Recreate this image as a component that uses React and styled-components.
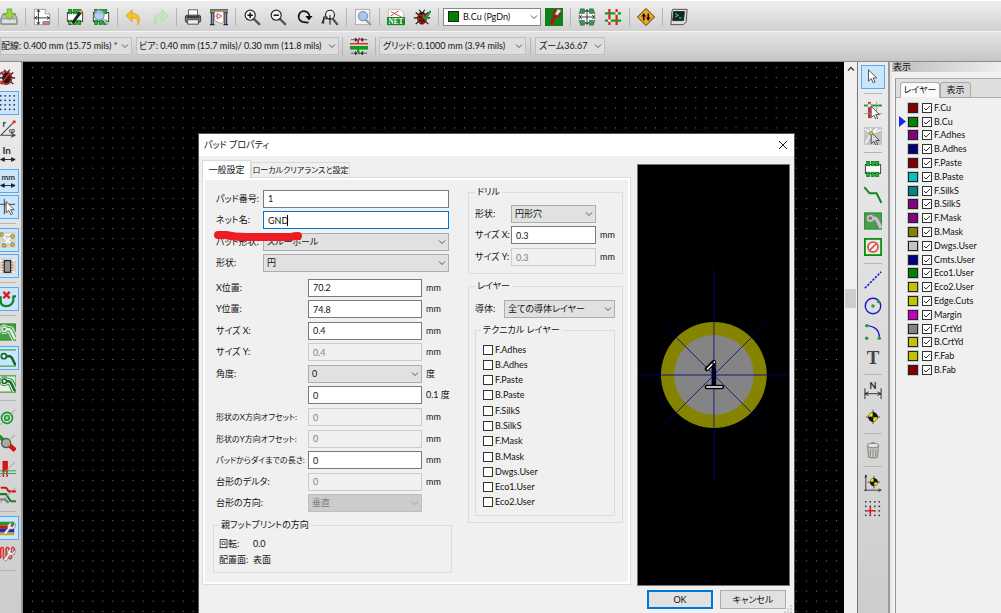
import React from "react";
import styled, { createGlobalStyle, css } from "styled-components";

const Global = createGlobalStyle`
  * { box-sizing: border-box; }
  body { margin: 0; overflow: hidden; }
  body, button, input, select, legend {
    font-family: Lato, "Noto Sans CJK JP", sans-serif;
    font-size: 9px;
    line-height: 14px;
    color: #111;
    font-feature-settings: "palt";
  }
`;

/* ---------- icons ---------- */

const G = "#0f8a14";
const line = { fill: "none", strokeLinecap: "round", strokeLinejoin: "round" };
const Chip = ({ y = 0 }) => (
  <g>
    <rect x="1.5" y={5 + y} width="17" height="10" fill="#fff" stroke="#333" />
    {[3, 8, 13].map((x) => (
      <g key={x} fill="#13b52a" stroke="#055a10" strokeWidth=".6">
        <rect x={x} y={1.5 + y} width="3.5" height="5" />
        <rect x={x} y={13.5 + y} width="3.5" height="5" />
      </g>
    ))}
  </g>
);
const Lens = ({ children }) => (
  <g>
    <path d="M12 12l6 6" stroke="#555" strokeWidth="2.6" strokeLinecap="round" />
    <circle cx="8" cy="8" r="5.6" fill="#f4f4f4" stroke="#222" strokeWidth="1.3" />
    {children}
  </g>
);
const Pointer = ({ x = 5, y = 2, fill = "#fff" }) => (
  <path d={`M${x} ${y}v12.5l3-2.7 2.3 4.7 2-1-2.2-4.5h4z`} fill={fill} stroke="#444" strokeWidth="1" />
);
const Bug = ({ c }) => (
  <g>
    <path d="M3 5l4 3M17 5l-4 3M1 11h5M19 11h-5M3 18l4-4M17 18l-4-4M7 2l2 3M13 2l-2 3" stroke="#111" strokeWidth="1.3" />
    <ellipse cx="10" cy="11.5" rx="5" ry="6.5" fill={c} stroke="#111" strokeWidth=".7" />
    <path d="M6 6.5a4.5 4 0 0 1 8 0z" fill="#111" />
    <path d="M10 6v12" stroke="#111" strokeWidth=".9" />
    <g fill="#111"><circle cx="7.6" cy="10" r="1.1" /><circle cx="12.4" cy="10" r="1.1" /><circle cx="8" cy="14" r="1.1" /><circle cx="12" cy="14" r="1.1" /></g>
  </g>
);
const Target = ({ x = 10, y = 10, r = 5 }) => (
  <g transform={`translate(${x} ${y})`}>
    <circle r={r} fill="#111" stroke="#111" />
    <path d={`M0 0V${-r}A${r} ${r} 0 0 0 ${-r} 0zM0 0V${r}A${r} ${r} 0 0 0 ${r} 0z`} fill="#f3e600" />
    <path d={`M0 ${-r - 3}V${r + 3}M${-r - 3} 0H${r + 3}`} stroke="#222" strokeWidth=".8" />
  </g>
);
const zoneTrack = "M7 7h5c3 0 3 4 7 11";
const Zone = ({ fill, edge, bg }) => (
  <g>
    <rect x="0" y="1" width="20" height="18" fill={bg} stroke={G} />
    <path d={zoneTrack} {...line} strokeLinecap="butt" stroke={edge} strokeWidth="7.6" />
    <circle cx="7" cy="7" r="5.300" fill={edge} />
    <path d={zoneTrack} {...line} strokeLinecap="butt" stroke={bg} strokeWidth="5.400" />
    <circle cx="7" cy="7" r="4.300" fill={bg} />
    <path d={zoneTrack} {...line} strokeLinecap="butt" stroke={fill} strokeWidth="2.800" />
    <circle cx="7" cy="7" r="2.500" fill={bg} stroke={fill} strokeWidth="1.800" />
  </g>
);
const Wrench = () => (
  <path d="M19 5a4.500 4.500 0 0 1-6 6l-4 7-3-2 5-6a4.500 4.500 0 0 1 4-6l-1 4 2 1z" fill="#f4f4f4" stroke="#777" strokeWidth=".8" />
);
const dots = (xs, ys, r, fill) => xs.flatMap((x) => ys.map((y) => <circle key={`${x}-${y}`} cx={x} cy={y} r={r} fill={fill} />));
const Arrows = () => <path d="M3 15h16M3 15l4-2v4zM19 15l-4-2v4z" fill="#222" stroke="#222" />;

const icons = {
  save: <g><path d="M1 12l2-5h14l2 5v6H1z" fill="#bdbdbd" stroke="#777" /><rect x="1.500" y="12" width="17" height="5.500" rx="1" fill="#dedede" stroke="#888" /><path d="M8 1h5v5h4l-6.500 7L4 6h4z" fill="#9bd43a" stroke="#5f9a17" strokeWidth=".8" /></g>,
  page: <g><path d="M1.500 1.500h12l5 5v12h-17z" fill="#fff" stroke="#999" /><path d="M13.500 1.500v5h5" fill="#eee" stroke="#999" /><path d="M6 2v16M2 11h16M4.500 4L6 2l1.500 2M4.500 16L6 18l1.500-2M4 9.500L2 11l2 1.500M16 9.500l2 1.500-2 1.500" {...line} stroke="#222" /><path d="M11 15h7v3h-7z" fill="#d88" stroke="#733" strokeWidth=".6" /></g>,
  edit: <g><Chip /><path d="M5 17L16 2l3 2L8 18l-4 1z" fill="#222" /><path d="M5 16l2 2" stroke="#f3a8b8" strokeWidth="2" /><path d="M15 3l3 2" stroke="#f5c518" strokeWidth="2" /></g>,
  browse: <g><Chip /><path d="M12 12l6 6" stroke="#bbb" strokeWidth="2.500" /><circle cx="8" cy="8" r="5.500" fill="#a9cdf2" fillOpacity=".9" stroke="#7d97b5" strokeWidth="1.300" /></g>,
  undo: <path d="M8 2v4c6 0 11 4 6 13 1-5 0-8-6-8v4L1 8.500z" fill="#f4c22a" stroke="#d99b12" strokeWidth=".8" />,
  redo: <path d="M12 2v4C6 6 1 10 6 19c-1-5 0-8 6-8v4l7-6.500z" fill="#c6e6bd" stroke="#acd8a2" strokeWidth=".8" />,
  print: <g><path d="M5 2h10v8H5z" fill="#fff" stroke="#555" /><rect x="1.500" y="8" width="17" height="8" rx="2" fill="#777" stroke="#333" /><path d="M4 13h12v5H4z" fill="#eee" stroke="#444" /><path d="M3 10h14" stroke="#222" strokeWidth="1.500" /></g>,
  plot: <g><rect x="0" y="1.500" width="20" height="4" fill="#8f9058" stroke="#444" strokeWidth=".7" /><path d="M1.500 5v13M3.500 5v13M16.500 5v13M18.500 5v13M0 18.500h5M15 18.500h5" stroke="#224" strokeWidth="1.200" /><path d="M5 4h10v12l-3 1-7-3z" fill="#fff" stroke="#777" strokeWidth=".7" /><path d="M8 6l5 3-5 3zM6 9h2" fill="none" stroke="#c33" /></g>,
  zoomIn: <Lens><path d="M5 8h6M8 5v6" stroke="#111" strokeWidth="1.600" /></Lens>,
  zoomOut: <Lens><path d="M5 8h6" stroke="#111" strokeWidth="1.600" /></Lens>,
  refresh: <g><path d="M15 15.500H9a6 6 0 1 1 7-6" {...line} stroke="#111" strokeWidth="2" transform="rotate(8 10 10)" /><path d="M11.500 9h8l-4 5z" fill="#111" /></g>,
  fit: <g><path d="M13 12l5 6" stroke="#555" strokeWidth="2.500" strokeLinecap="round" /><circle cx="10" cy="7.500" r="5" fill="#eee" stroke="#222" strokeWidth="1.300" /><path d="M1 17l2-5h8M3 17v-7h4M10 8v10" {...line} stroke="#222" strokeWidth="1.200" /></g>,
  find: <g><rect x="1.500" y="1.500" width="16" height="17" fill="#f3f3f3" stroke="#aaa" /><path d="M13 13l5 5" stroke="#999" strokeWidth="2.500" strokeLinecap="round" /><circle cx="10" cy="9" r="5" fill="#a8c8f0" stroke="#8196b8" strokeWidth="1.400" /></g>,
  net: <g><path d="M1.500 1.500h13l4 4v13h-17z" fill="#fff" stroke="#bbb" /><path d="M4 4l12 6M4 9l9-6" stroke="#b44" /><rect x="0" y="10" width="20" height="9" fill="#178a1f" /><text x="10" y="17.500" textAnchor="middle" fontSize="8" fontWeight="700" fontFamily="Liberation Serif, serif" fill="#fff">NET</text></g>,
  drc: <g><Bug c="#c3150d" /><path d="M11 9l3 3 5-8" {...line} stroke="#1f9a35" strokeWidth="2.400" /></g>,
  pads: <g><rect width="20" height="20" y="0" fill="#12801a" /><circle cx="13" cy="6" r="3.500" fill="none" stroke="#b01414" strokeWidth="2" /><path d="M11 9l-4 9" stroke="#b01414" strokeWidth="3.500" /><path d="M14 1l-3 6 3 1 4-5" fill="#e9e9e9" stroke="#666" strokeWidth=".6" /></g>,
  move: <g><rect x="1.500" y="3.500" width="17" height="13" fill="#fff" stroke="#444" strokeDasharray="2 1" />{[[3, 1], [13, 1], [3, 14], [13, 14]].map(([x, y]) => <rect key={`${x}${y}`} x={x} y={y} width="4" height="5" fill="#27a338" stroke="#244" strokeWidth=".6" />)}<path d="M2 10h16M10 2v16M4 8l-2 2 2 2M16 8l2 2-2 2M8 4l2-2 2 2M8 16l2 2 2-2" {...line} stroke="#222" /></g>,
  route: <g fill="none" strokeWidth="2.400"><path d="M6 1v18M14 1v18" stroke="#e01b1b" /><path d="M1 6h18M1 14h18" stroke="#149a1e" /><g fill="#fff" stroke="none"><circle cx="6" cy="14" r="1.500" /><circle cx="14" cy="6" r="1.500" /></g></g>,
  sign: <g><path d="M10 .5l9.500 9.500-9.500 9.500L.5 10z" fill="#f5a81c" stroke="#3a2a00" /><path d="M7.500 14V8M12.500 6v6" stroke="#111" strokeWidth="1.800" /><path d="M4.800 9.500L7.500 5.500l2.700 4zM9.800 10.500l2.700 4 2.700-4z" fill="#111" /></g>,
  script: <g><path d="M3 1.500h16l-1 14-3 3H1l1-14z" fill="#ddd" stroke="#444" /><path d="M4 4h12l-1 10H3z" fill="#10261a" stroke="#222" /><path d="M6 6l3 2-3 2M10 11h3" fill="none" stroke="#36c46a" strokeWidth="1.300" /></g>,
  tracks: <g><path d="M0 7.500h20" stroke="#e01b1b" strokeWidth="1.500" /><path d="M0 12h20" stroke="#149a1e" strokeWidth="4" /><path d="M9 7V4l2-3" fill="none" stroke="#c22" strokeWidth="2" /><path d="M9 12v4l2 3" fill="none" stroke="#149a1e" strokeWidth="2.500" /><path d="M1 3h5M19 3h-5M1 18h5M19 18h-5M6 1l2 2-2 2zM14 1l-2 2 2 2zM6 16l2 2-2 2zM14 16l-2 2 2 2z" fill="#222" stroke="#222" strokeWidth=".8" /></g>,
  drcOff: <g><Bug c="#222" /><circle cx="8" cy="11" r="7" fill="none" stroke="#cc2222" strokeOpacity=".85" strokeWidth="2" /><path d="M4 16l9-10" stroke="#cc2222" strokeWidth="2" /></g>,
  grid: <g>{dots([3, 8, 13, 18], [2, 7, 12, 17], 1, "#333")}</g>,
  polar: <g><path d="M3 17h15M3 17L17 3M15 15l4 2-4 2" {...line} stroke="#444" strokeWidth="1.200" /><circle cx="18" cy="2" r="1.800" fill="#f22" /><text x="5" y="8" fontSize="10" fontWeight="700" fill="#333">r</text><text x="12" y="14" fontSize="9" fontWeight="700" fill="#444">φ</text></g>,
  inch: <g><text x="5" y="9" fontSize="11" fontWeight="700" fill="#333">In</text><Arrows /></g>,
  mm: <g><text x="4" y="9" fontSize="9" fontWeight="700" fill="#333">mm</text><Arrows /></g>,
  cross: <g><path d="M7 1v17M0 7h19" stroke="#333" /><Pointer x={9} y={4} /></g>,
  rats: <g><rect width="20" height="18" y="1" fill="#d4d4d4" /><path d="M4 4l12 12M16 5L6 16M4 4h12" stroke="#fff" strokeWidth="1.500" />{[[4, 4], [16, 6], [7, 16], [16, 15]].map(([x, y]) => <circle key={`${x}${y}`} cx={x} cy={y} r="2" fill="#d8d800" stroke="#666" />)}</g>,
  modRats: <g><rect width="20" height="18" y="1" fill="#d4d4d4" /><path d="M1 2l5 5M19 2l-5 5M1 18l5-5M19 18l-5-5" stroke="#fff" strokeWidth="1.500" /><path d="M4 6h13M4 9h13M4 12h13M4 15h13" stroke="#d9783a" strokeWidth="1.300" /><rect x="7" y="4" width="7" height="13" fill="#999" stroke="#222" strokeWidth="1.300" /></g>,
  autoDel: <g><path d="M3 8v4q0 6 6 6t8-6V7h3" {...line} stroke="#168028" strokeWidth="2.400" /><path d="M6 2l7 7M13 2L6 9" stroke="#e01b1b" strokeWidth="2.600" /></g>,
  zoneFill: <Zone bg="#4a9d4f" edge="#e2efe0" fill="#e2efe0" />,
  zoneNo: <g><path d="M0 1h20M0 19h20" stroke={G} /><path d="M8 8h5c3 0 3 4 6 9" {...line} stroke="#156b2c" strokeWidth="2.800" /><circle cx="6.500" cy="8" r="2.800" fill="#fff" stroke="#156b2c" strokeWidth="2" /></g>,
  zoneLine: <Zone bg="#e6eee2" edge="#2c8a3c" fill="#176b2c" />,
  via: <g><circle cx="10" cy="11" r="6" fill="#dff0df" stroke="#1d9a3a" strokeWidth="2" /><circle cx="10" cy="11" r="2.500" fill="none" stroke="#1d9a3a" strokeWidth="2" /><path d="M2 19L19 2" stroke="#999" /></g>,
  padSketch: <g><path d="M0 1l8 8" stroke="#149a1e" strokeWidth="4" /><path d="M12 12l7 6" stroke="#d31616" strokeWidth="5" /><circle cx="9" cy="10" r="5" fill="#aaa" stroke="#555" strokeWidth="1.500" /><path d="M9 10h4v4z" fill="#ca2" /><path d="M12 7l7-6" stroke="#999" /></g>,
  highC: <g><path d="M5 1h6v12H5z" fill="#d31616" /><path d="M6 10v9M10 10v9" stroke="#d31616" strokeWidth="1.600" /><path d="M0 12h20M0 15h20" stroke="#2c9a3c" /><path d="M2 19L19 2" stroke="#999" /></g>,
  trackSk: <g {...line} strokeWidth="2.300"><path d="M4 2h5l3 4h7" stroke="#d31616" /><path d="M1 9h8l5 8h5" stroke="#17802a" /><path d="M3 15h5l3 3" stroke="#777" /><path d="M2 19L19 2" stroke="#999" strokeWidth="1" /></g>,
  layers: <g><path d="M0 3h18v4H0z" fill="#1f9a2a" /><path d="M0 7h18v4H0z" fill="#d31616" /><path d="M0 11h18v4H0z" fill="#1330c4" /><path d="M0 15h18v3H0z" fill="#d8a018" /><Wrench /></g>,
  micro: <g><path d="M3 14V4q1.500-3 3 0v10q1.500 3 3 0V4q1.500-3 3 0v10q1.500 3 3 0V4q1.500-3 3 0v6" {...line} stroke="#d33" strokeWidth="1.800" /><Wrench /></g>,
  select: <Pointer x={5} y={2} />,
  highlight: <g><path d="M6 1v18" stroke="#e01b1b" strokeWidth="3" /><path d="M0 5h20" stroke="#149a1e" strokeWidth="2" /><path d="M0 14h20M14 1v18" stroke="#999" /><circle cx="6" cy="5" r="2" fill="#fff" stroke="#999" /><Pointer x={8} y={6} /></g>,
  localRats: <g><rect width="20" height="20" rx="2" fill="#c4c4c4" /><path d="M8 7L1 2M8 7L19 3M8 7L2 18M8 7l-1-6M8 7l7-6" stroke="#fff" strokeWidth="1.500" /><Pointer x={8} y={6} fill="#ddd" /><circle cx="8" cy="7" r="2" fill="#d8d800" stroke="#775" /></g>,
  footprint: <Chip />,
  addTrack: <path d="M1 2l5 6h8l5 10" {...line} stroke="#148a1c" strokeWidth="2.200" />,
  addZone: <g><rect x="0" y="1" width="20" height="18" fill="#4a9d4f" stroke={G} /><path d={zoneTrack} {...line} strokeLinecap="butt" stroke="#777" strokeWidth="5.500" /><circle cx="7" cy="7" r="4.800" fill="#777" /><path d={zoneTrack} {...line} strokeLinecap="butt" stroke="#c4c4c4" strokeWidth="3.800" /><circle cx="7" cy="7" r="3" fill="#777" stroke="#c4c4c4" strokeWidth="2" /></g>,
  keepout: <g><rect x="1" y="1" width="18" height="18" fill="#dff0df" stroke={G} strokeWidth="2" /><circle cx="10" cy="10" r="5.500" fill="#fff" stroke="#e05050" strokeWidth="2" /><path d="M6 14l8-8" stroke="#e05050" strokeWidth="2" /></g>,
  gline: <path d="M1 19L19 1" stroke="#1515c8" strokeWidth="1.800" strokeDasharray="2.500 1.500" />,
  circle: <g><circle cx="10" cy="10" r="8.600" fill="none" stroke="#1515c8" strokeWidth="1.500" />{dots([10], [10], 2, "#2f9a45")}{dots([16], [5], 2, "#2f9a45")}</g>,
  arc: <g><path d="M3 3q14 1 14 13" fill="none" stroke="#1515c8" strokeWidth="1.500" />{dots([3], [3, 17], 2, "#2f9a45")}{dots([17], [17], 2, "#2f9a45")}</g>,
  text: <text x="10" y="17" textAnchor="middle" fontSize="21" fontWeight="700" fontFamily="Liberation Serif, serif" fill="#444">T</text>,
  dim: <g><path d="M1 7v12M19 7v12M1 13h18M5 11l-4 2 4 2M15 11l4 2-4 2" fill="none" stroke="#222" /><text x="10" y="8" textAnchor="middle" fontSize="10" fontWeight="700" fill="#222">N</text></g>,
  target: <Target />,
  trash: <g><path d="M4 6h12l-1 12q-5 2-10 0z" fill="#c8c8c0" stroke="#777" /><ellipse cx="10" cy="5" rx="6.500" ry="2.500" fill="#e4e4df" stroke="#777" /><path d="M7 9v8M10 9v9M13 9v8" stroke="#8a8a84" /><path d="M8 2h4" stroke="#777" /></g>,
  origin: <g><path d="M2 19V1M0 18h19M1 4l1-3 1 3M16 16.500l3 1.500-3 1.500" fill="none" stroke="#333" /><Target x={11} y={9} r={4} /></g>,
  gridOrigin: <g>{dots([2, 7, 12, 17], [2, 7, 12, 17], 1, "#333")}<path d="M7 8v8M3 12h8" stroke="#e01b1b" strokeWidth="1.800" /></g>,
};

const IconSvg = styled.svg`
  display: block;
  width: 18px;
  height: 18px;
`;
const Icon = ({ name }) => <IconSvg viewBox="0 0 20 20" aria-hidden="true">{icons[name]}</IconSvg>;

/* ---------- shared controls ---------- */

const ToolButton = styled.button`
  flex: none;
  display: grid;
  place-items: center;
  width: 24px;
  height: 24px;
  margin: 1px;
  padding: 0;
  border: 1px solid ${(p) => (p.$on ? "#55aaf5" : "transparent")};
  background: ${(p) => (p.$on ? "#cbe6fc" : "transparent")};
`;
const Rule = styled.hr`
  flex: none;
  align-self: center;
  margin: 3px;
  border: 0;
  background: #b5b5b5;
  ${(p) => (p.$vertical ? css`width: 1px; height: 18px;` : css`width: 18px; height: 1px;`)}
`;
const Tools = ({ items, vertical, onSet = [] }) =>
  items.split(" ").map((n, i) =>
    n === "|" ? <Rule key={i} $vertical={vertical} /> : (
      <ToolButton key={i} type="button" aria-label={n} $on={onSet.includes(n)}><Icon name={n} /></ToolButton>
    ));

const SelectBox = styled.span`
  position: relative;
  flex: ${(p) => (p.$w ? "none" : "1")};
  display: flex;
  width: ${(p) => (p.$w ? `${p.$w}px` : "auto")};
  min-width: 0;
`;
const SelectField = styled.select`
  appearance: none;
  width: 100%;
  height: 18px;
  margin: 0;
  padding: 0 14px 0 ${(p) => p.$pad ?? 3}px;
  border: 1px solid ${(p) => (p.$tone === "bar" ? "#c0c0c0" : p.$tone === "white" ? "#888" : "#adadad")};
  border-radius: 0;
  background: ${(p) => (p.$tone === "bar" ? "#dedede" : p.$tone === "white" ? "#fff" : "#e1e1e1")};
  line-height: 16px;
  color: #111;
  &:disabled { background: #ccc; border-color: #bfbfbf; color: #808080; opacity: 1; }
`;
const Chevron = styled.svg`
  position: absolute;
  right: 3px;
  top: 50%;
  width: 8px;
  height: 8px;
  margin-top: -4px;
  pointer-events: none;
  fill: none;
  stroke: ${(p) => (p.$dim ? "#a0a0a0" : "#555")};
`;
const Select = ({ id, label, value, w, tone, disabled, pad }) => (
  <SelectBox $w={w}>
    <SelectField id={id} aria-label={label} $tone={tone} $pad={pad} disabled={disabled}><option>{value}</option></SelectField>
    <Chevron viewBox="0 0 8 8" $dim={disabled}><path d="M1 2.500l3 3 3-3" /></Chevron>
  </SelectBox>
);
const TextBox = styled.input`
  flex: 1;
  min-width: 0;
  width: 100%;
  height: 18px;
  padding: 0 4px;
  border: 1px solid ${(p) => (p.$active ? "#0078d7" : "#7a7a7a")};
  background: #fff;
  &:disabled { background: #f0f0f0; border-color: #ccc; color: #808080; }
`;

/* ---------- page frame ---------- */

const Page = styled.div`
  position: relative;
  display: flex;
  flex-direction: column;
  height: 100vh;
  overflow: hidden;
  background: #f0f0f0;
`;
const TopBar = styled.header`
  flex: none;
  display: flex;
  align-items: center;
  height: 31px;
  padding: 2px 0 0;
  border-top: 1px solid #fff;
  background: linear-gradient(#eee, #d0d0d0);
  white-space: nowrap;
`;
const MainTools = styled.div`
  display: flex;
  align-items: center;
  margin-left: -4px;
`;
const LayerPick = styled.span`
  position: relative;
  display: flex;
  margin-left: 1px;
`;
const LayerSwatch = styled.i`
  position: absolute;
  left: 5px;
  top: 3px;
  width: 11px;
  height: 11px;
  border: 1px solid #222;
  background: #008400;
`;
const OptionBar = styled(TopBar)`
  padding: 0 0 2px;
  border-top-color: #f4f4f4;
  border-bottom: 1px solid #8a8a8a;
  background: linear-gradient(#e4e4e4, #c6c6c6);
`;
const OptionGroup = styled.div`
  display: flex;
  align-items: center;
  gap: ${(p) => p.$gap}px;
`;
const Work = styled.div`
  flex: 1;
  min-height: 0;
  display: flex;
`;
const SideBar = styled.nav`
  flex: none;
  display: flex;
  flex-direction: column;
  align-items: flex-end;
  width: ${(p) => p.$w}px;
  padding-top: 2px;
  padding-right: ${(p) => p.$right}px;
  overflow: hidden;
  background: linear-gradient(#ececec, #cdcdcd);
  border-right: 2px solid #999;
  & > hr { align-self: flex-end; margin-right: 4px; }
`;
const Canvas = styled.main`
  flex: 1;
  min-width: 0;
  background: #000;
  & > svg { display: block; width: 100%; height: 100%; }
`;
const ScrollTrack = styled.div`
  flex: none;
  display: flex;
  flex-direction: column;
  align-items: center;
  width: 14px;
  background: #f0f0f0;
  border-right: 1px solid #777;
  padding-top: 3px;
`;
const ScrollThumb = styled.div`
  width: 11px;
  height: 19px;
  margin-top: 216px;
  background: #cdcdcd;
`;

/* ---------- layer panel ---------- */

const Panel = styled.aside`
  flex: none;
  display: flex;
  flex-direction: column;
  width: 111px;
  border-left: 2px solid #e8e8e8;
`;
const PanelTitle = styled.h2`
  margin: 0;
  padding: 0 1px;
  font-size: 9px;
  font-weight: 400;
  line-height: 10px;
  background: linear-gradient(90deg, #bdbdbd, #eee);
`;
const PanelBook = styled.div`
  flex: 1;
  display: flex;
  flex-direction: column;
  margin: 6px 0 0 3px;
  border-left: 1px solid #999;
  border-top: 1px solid #aaa;
`;
const PanelTabs = styled.div`
  display: flex;
  align-items: flex-end;
  height: 19px;
  padding-left: 4px;
  border-bottom: 1px solid #aaa;
  background: #dedede;
`;
const PanelTab = styled.button`
  width: ${(p) => (p.$on ? 40 : 31)}px;
  height: 16px;
  margin-bottom: -1px;
  padding: 0;
  border: 1px solid #aaa;
  border-bottom-color: ${(p) => (p.$on ? "#f0f0f0" : "#aaa")};
  border-radius: 3px 3px 0 0;
  background: ${(p) => (p.$on ? "#fafafa" : "#d8d8d8")};
`;
const LayerList = styled.ul`
  display: grid;
  grid-auto-rows: 1fr;
  height: 276px;
  margin: 3px 0 0;
  padding: 0;
  list-style: none;
`;
const LayerRow = styled.li`
  display: flex;
  align-items: center;
  min-height: 0;
`;
const Marker = styled.svg`
  width: 11px;
  height: 11px;
  padding-left: 3px;
  visibility: ${(p) => (p.$on ? "visible" : "hidden")};
`;
const Swatch = styled.button`
  width: 12px;
  height: 12px;
  margin-right: 3px;
  padding: 0;
  border: 1px solid #c8c8c8;
  background: ${(p) => p.$c};
  box-shadow: inset 0 0 0 1px #222;
`;
const CheckLabel = styled.label`
  display: flex;
  align-items: center;
  gap: 2px;
  line-height: 12px;
`;
const Tick = styled.input`
  appearance: none;
  flex: none;
  width: 10px;
  height: 10px;
  margin: 0;
  border: 1px solid #333;
  background: #fff;
`;
const CheckWrap = styled.span`
  position: relative;
  display: flex;
  & > svg { position: absolute; inset: 0; width: 10px; height: 10px; pointer-events: none; }
`;
const Checked = (props) => (
  <CheckWrap>
    <Tick type="checkbox" defaultChecked {...props} />
    <svg viewBox="0 0 10 10" fill="none" stroke="#333"><path d="M2 5l2 2 4-4" /></svg>
  </CheckWrap>
);

/* ---------- dialog ---------- */

const Dialog = styled.section`
  position: absolute;
  left: 198px;
  top: 133px;
  display: flex;
  flex-direction: column;
  width: 597px;
  height: 481px;
  border: 1px solid #555;
  border-width: 1px 1px 0 1px;
  background: #f0f0f0;
`;
const TitleBar = styled.header`
  display: flex;
  align-items: center;
  justify-content: space-between;
  height: 22px;
  padding: 0 6px 1px 5px;
  background: #fff;
`;
const Title = styled.h1`
  margin: 0;
  font-size: 9px;
  font-weight: 400;
`;
const Close = styled.button`
  display: flex;
  padding: 0;
  border: 0;
  background: none;
`;
const DialogBody = styled.div`
  display: flex;
  gap: 6px;
  padding: 4px 4px 0 3px;
`;
const Book = styled.div`
  width: 430px;
`;
const Tabs = styled.div`
  display: flex;
  align-items: flex-end;
  height: 17px;
`;
const Tab = styled.button`
  width: ${(p) => p.$w}px;
  height: ${(p) => (p.$on ? 18 : 15)}px;
  margin-bottom: ${(p) => (p.$on ? -1 : 0)}px;
  padding: 0;
  border: 1px solid #d9d9d9;
  border-bottom: 0;
  background: ${(p) => (p.$on ? "#fff" : "#f0f0f0")};
  font-size: ${(p) => (p.$dense ? 8 : 9)}px;
  white-space: nowrap;
`;
const Sheet = styled.div`
  display: flex;
  align-items: flex-start;
  gap: 16px;
  height: 408px;
  padding: 8px 4px 0 10px;
  border: 1px solid #dcdcdc;
  box-shadow: inset 0 0 0 2px #fff;
`;
const LeftColumn = styled.div`
  width: 239px;
`;
const RightColumn = styled.div`
  display: flex;
  flex-direction: column;
  gap: 6px;
  width: 155px;
`;
const Rows = styled.div`
  display: grid;
  grid-auto-rows: 1fr;
  height: ${(p) => p.$h}px;
  margin: ${(p) => p.$m ?? "0"};
`;
const FormRow = styled.div`
  display: flex;
  align-items: center;
  min-height: 0;
`;
const Caption = styled.label`
  flex: none;
  width: ${(p) => p.$w}px;
  font-size: ${(p) => (p.$dense ? 8 : 9)}px;
  white-space: nowrap;
`;
const Unit = styled.span`
  width: ${(p) => p.$w ?? 27}px;
  padding-left: 4px;
  white-space: nowrap;
`;
const CaretBox = styled.span`
  position: relative;
  flex: 1;
  display: flex;
  &::after {
    content: "";
    position: absolute;
    left: 24px;
    top: 4px;
    width: 1px;
    height: 11px;
    background: #000;
  }
`;
const Group = styled.fieldset`
  min-width: 0;
  margin: ${(p) => p.$m ?? "0"};
  padding: ${(p) => p.$p ?? "0 6px"};
  border: 1px solid #dcdcdc;
  height: ${(p) => p.$h}px;
  & > legend { padding: 0 2px; line-height: 12px; }
`;
const Facts = styled.dl`
  display: grid;
  grid-template-columns: 34px 1fr;
  row-gap: 2px;
  margin: 6px 0 0;
  & > dd { margin: 0; }
`;
const Preview = styled.svg`
  display: block;
  width: 153px;
  height: 422px;
  margin-top: 4px;
  background: #000;
  border: 1px solid #777;
`;
const Footer = styled.footer`
  display: flex;
  justify-content: flex-end;
  gap: 7px;
  padding: 4px 8px 0;
`;
const PushButton = styled.button`
  width: 66px;
  height: 19px;
  padding: 0;
  border: ${(p) => (p.$primary ? "2px solid #0078d7" : "1px solid #adadad")};
  background: #e1e1e1;
  line-height: 15px;
`;
const Grip = styled.svg`
  position: absolute;
  right: 2px;
  bottom: 1px;
  width: 8px;
  height: 8px;
`;
const RedMark = styled.svg`
  position: absolute;
  left: 12px;
  top: 94px;
  width: 96px;
  height: 20px;
  pointer-events: none;
`;

/* ---------- data ---------- */

const layers = [
  ["F.Cu", "#840000"], ["B.Cu", "#008400"], ["F.Adhes", "#840084"], ["B.Adhes", "#000084"], ["F.Paste", "#840000"],
  ["B.Paste", "#00c2c2"], ["F.SilkS", "#008484"], ["B.SilkS", "#840084"], ["F.Mask", "#840084"], ["B.Mask", "#848400"],
  ["Dwgs.User", "#c2c2c2"], ["Cmts.User", "#000084"], ["Eco1.User", "#008400"], ["Eco2.User", "#c2c200"],
  ["Edge.Cuts", "#c2c200"], ["Margin", "#c200c2"], ["F.CrtYd", "#848484"], ["B.CrtYd", "#c2c200"],
  ["F.Fab", "#c2c200"], ["B.Fab", "#840000"],
];
const technical = ["F.Adhes", "B.Adhes", "F.Paste", "B.Paste", "F.SilkS", "B.SilkS", "F.Mask", "B.Mask", "Dwgs.User", "Eco1.User", "Eco2.User"];
const geometry = [
  { label: "X位置:", value: "70.2", unit: "mm" },
  { label: "Y位置:", value: "74.8", unit: "mm" },
  { label: "サイズ X:", value: "0.4", unit: "mm" },
  { label: "サイズ Y:", value: "0.4", unit: "mm", off: true },
  { label: "角度:", value: "0", unit: "度", pick: true },
  { label: "", value: "0", unit: "0.1 度" },
  { label: "形状のX方向オフセット:", value: "0", unit: "mm", off: true, dense: true },
  { label: "形状のY方向オフセット:", value: "0", unit: "mm", off: true, dense: true },
  { label: "パッドからダイまでの長さ:", value: "0", unit: "mm", dense: true },
  { label: "台形のデルタ:", value: "0", unit: "mm", off: true },
  { label: "台形の方向:", value: "垂直", unit: "", pick: true, off: true },
];
const drill = [
  { label: "形状:", value: "円形穴", pick: true },
  { label: "サイズ X:", value: "0.3", unit: "mm" },
  { label: "サイズ Y:", value: "0.3", unit: "mm", off: true },
];

const Fields = ({ rows, name, cap, unitW }) =>
  rows.map((r, i) => {
    const id = `${name}-${i}`;
    return (
      <FormRow key={id}>
        <Caption htmlFor={id} $w={cap} $dense={r.dense}>{r.label}</Caption>
        {r.pick ? <Select id={id} value={r.value} disabled={r.off} /> : <TextBox id={id} defaultValue={r.value} disabled={r.off} />}
        <Unit $w={unitW}>{r.unit}</Unit>
      </FormRow>
    );
  });

const PadPreview = () => (
  <Preview viewBox="0 0 151 420" role="img" aria-label="pad 1">
    <circle cx="76" cy="210" r="53" fill="#848400" />
    <circle cx="76" cy="210" r="40" fill="#848484" />
    <g stroke="#000084">
      <path d="M23 157l106 106M129 157L23 263" strokeWidth=".8" />
      <path d="M0 210h151M76 103v214" strokeWidth="1.400" strokeOpacity=".55" />
    </g>
    <path d="M69 204l7-7v25M69 222h15" {...line} stroke="#000" strokeWidth="4.500" />
    <path d="M69.500 204l5-5M69 222h15M76.500 197v7" {...line} stroke="#fff" strokeWidth="1.600" />
    <path d="M76 198v22" stroke="#000030" strokeWidth="2.600" />
  </Preview>
);

const PadDialog = () => (
  <Dialog role="dialog" aria-labelledby="dialog-title">
    <TitleBar>
      <Title id="dialog-title">パッド プロパティ</Title>
      <Close type="button" aria-label="close">
        <svg width="10" height="10" viewBox="0 0 10 10" stroke="#222"><path d="M1 1l8 8M9 1L1 9" /></svg>
      </Close>
    </TitleBar>
    <DialogBody>
      <Book>
        <Tabs>
          <Tab type="button" $on $w={49}>一般設定</Tab>
          <Tab type="button" $dense $w={99}>ローカルクリアランスと設定</Tab>
        </Tabs>
        <Sheet>
          <LeftColumn>
            <Rows $h={86} $m="2px 3px 0">
              <FormRow><Caption htmlFor="num" $w={47}>パッド番号:</Caption><TextBox id="num" defaultValue="1" /></FormRow>
              <FormRow><Caption htmlFor="net" $w={47}>ネット名:</Caption><CaretBox><TextBox id="net" defaultValue="GND" $active /></CaretBox></FormRow>
              <FormRow><Caption htmlFor="kind" $w={47}>パッド形状:</Caption><Select id="kind" value="スルーホール" /></FormRow>
              <FormRow><Caption htmlFor="shape" $w={47}>形状:</Caption><Select id="shape" value="円" /></FormRow>
            </Rows>
            <Rows $h={237} $m="3px 3px 0"><Fields rows={geometry} name="geo" cap={92} /></Rows>
            <Group $h={54} $p="0 5px" $m="5px 0 0">
              <legend>親フットプリントの方向</legend>
              <Facts><dt>回転:</dt><dd>0.0</dd><dt>配置面:</dt><dd>表面</dd></Facts>
            </Group>
          </LeftColumn>
          <RightColumn>
            <Group $h={88}>
              <legend>ドリル</legend>
              <Rows $h={65} $m="5px 0 0"><Fields rows={drill} name="drill" cap={36} unitW={20} /></Rows>
            </Group>
            <Group $h={243} $p="0 7px 0 6px">
              <legend>レイヤー</legend>
              <Rows $h={20} $m="7px 0 5px">
                <FormRow><Caption htmlFor="copper" $w={29}>導体:</Caption><Select id="copper" value="全ての導体レイヤー" /></FormRow>
              </Rows>
              <Group $h={192} $p="0 5px">
                <legend>テクニカル レイヤー</legend>
                <Rows $h={168} $m="6px 0 0 2px">
                  {technical.map((t) => <CheckLabel key={t}><Tick type="checkbox" />{t}</CheckLabel>)}
                </Rows>
              </Group>
            </Group>
          </RightColumn>
        </Sheet>
      </Book>
      <PadPreview />
    </DialogBody>
    <Footer>
      <PushButton type="button" $primary>OK</PushButton>
      <PushButton type="button">キャンセル</PushButton>
    </Footer>
    <Grip viewBox="0 0 8 8">{dots([7], [1, 4, 7], 0.8, "#aaa")}{dots([4], [4, 7], 0.8, "#aaa")}{dots([1], [7], 0.8, "#aaa")}</Grip>
    <RedMark viewBox="0 0 96 20" fill="none" stroke="#ed1c24" strokeLinecap="round" strokeLinejoin="round">
      <path d="M7 7h8q8 2 20 2h45q3-1 7-1" strokeWidth="8" />
    </RedMark>
  </Dialog>
);

export default function App() {
  return (
    <Page lang="ja">
      <Global />
      <TopBar>
        <MainTools>
          <Tools vertical items="save | page | edit browse | undo redo | print plot | zoomIn zoomOut refresh fit | find | net drc |" />
          <LayerPick><Select label="layer" value="B.Cu (PgDn)" w={98} tone="white" pad={19} /><LayerSwatch /></LayerPick>
          <Tools vertical items="pads | move route | sign | script" />
        </MainTools>
      </TopBar>
      <OptionBar>
        <OptionGroup $gap={4}>
          <Select label="track width" value="配線: 0.400 mm (15.75 mils) *" w={132} tone="bar" pad={0} />
          <Select label="via size" value="ビア: 0.40 mm (15.7 mils)/ 0.30 mm (11.8 mils) *" w={203} tone="bar" pad={2} />
        </OptionGroup>
        <Tools vertical items="| tracks |" />
        <OptionGroup $gap={1}>
          <Select label="grid" value="グリッド: 0.1000 mm (3.94 mils)" w={147} tone="bar" />
          <Rule $vertical />
          <Select label="zoom" value="ズーム36.67" w={70} tone="bar" />
        </OptionGroup>
      </OptionBar>
      <Work>
        <SideBar $w={23} $right={1}>
          <Tools
            items="drcOff grid polar inch mm cross | rats modRats | autoDel | zoneFill zoneNo zoneLine | via padSketch highC trackSk | layers micro |"
            onSet={["grid", "mm", "cross", "rats", "modRats", "autoDel", "zoneNo", "layers"]}
          />
        </SideBar>
        <Canvas>
          <svg>
            <defs>
              <pattern id="dots" x="9" y="5" width="10.050" height="10.070" patternUnits="userSpaceOnUse">
                <rect width="1" height="1" fill="#888" />
              </pattern>
            </defs>
            <rect width="100%" height="100%" fill="url(#dots)" />
          </svg>
        </Canvas>
        <ScrollTrack>
          <svg width="8" height="8" viewBox="0 0 8 8" fill="none" stroke="#444" strokeWidth="1.500"><path d="M1 5.500l3-3 3 3" /></svg>
          <ScrollThumb />
        </ScrollTrack>
        <SideBar $w={32} $right={2}>
          <Tools
            items="select | highlight localRats | footprint addTrack addZone keepout | gline circle arc text | dim target | trash | origin gridOrigin"
            onSet={["select"]}
          />
        </SideBar>
        <Panel>
          <PanelTitle>表示</PanelTitle>
          <PanelBook>
            <PanelTabs><PanelTab type="button" $on>レイヤー</PanelTab><PanelTab type="button">表示</PanelTab></PanelTabs>
            <LayerList>
              {layers.map(([n, c]) => (
                <LayerRow key={n}>
                  <Marker viewBox="0 0 8 11" $on={n === "B.Cu"}><path d="M0 0l7 5.500-7 5.500z" fill="#2222e8" /></Marker>
                  <Swatch type="button" aria-label={n} $c={c} />
                  <CheckLabel><Checked />{n}</CheckLabel>
                </LayerRow>
              ))}
            </LayerList>
          </PanelBook>
        </Panel>
      </Work>
      <PadDialog />
    </Page>
  );
}
